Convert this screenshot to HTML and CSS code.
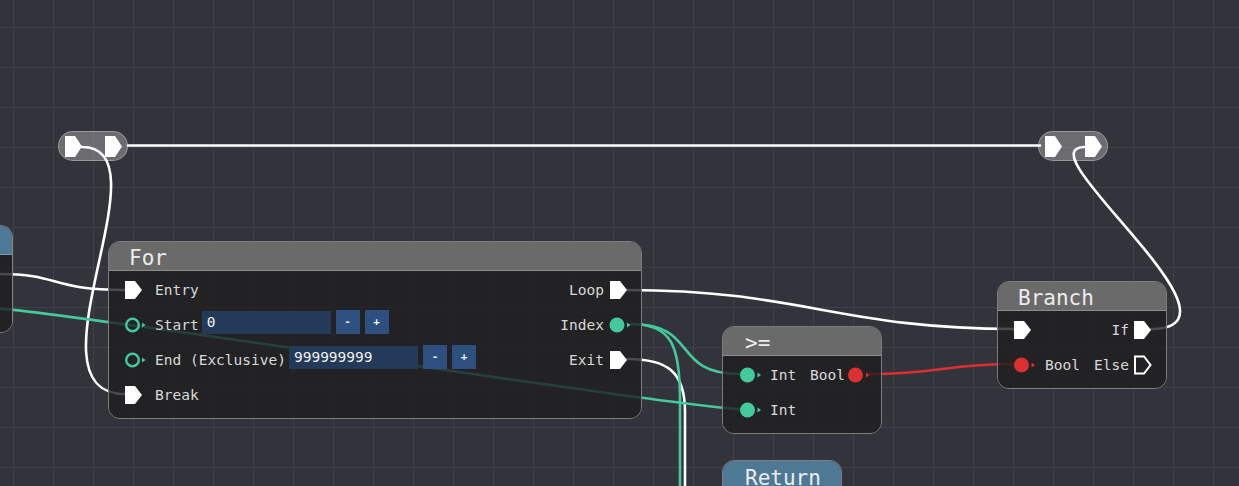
FILE: index.html
```html
<!DOCTYPE html>
<html>
<head>
<meta charset="utf-8">
<title>Blueprint</title>
<link rel="stylesheet" href="styles.css">
</head>
<body>
<div class="canvas">

  <div class="reroute reroute-left">
    <svg class="rpin" viewBox="0 0 17 21"><path d="M0 0H10L17 10.5L10 21H0Z"/></svg>
    <svg class="rpin" viewBox="0 0 17 21"><path d="M0 0H10L17 10.5L10 21H0Z"/></svg>
  </div>
  <div class="reroute reroute-right">
    <svg class="rpin" viewBox="0 0 17 21"><path d="M0 0H10L17 10.5L10 21H0Z"/></svg>
    <svg class="rpin" viewBox="0 0 17 21"><path d="M0 0H10L17 10.5L10 21H0Z"/></svg>
  </div>

  <svg class="links" width="1239" height="486" viewBox="0 0 1239 486">
    <g class="flow">
      <path d="M128 145.5H1040"/>
      <path d="M82 147C170 147 20 394 125 394"/>
      <path d="M1150 329C1262 329 1020 147 1085 147"/>
      <path d="M0 274C60 274 50 290 125 290"/>
      <path d="M627 290C800 290 840 329 1015 329"/>
      <path d="M627 359C668 359 685 372 685 412L685 490"/>
    </g>
    <g class="int">
      <path d="M-10 308C40 308 690 409 740 409"/>
      <path d="M631 324C700 324 670 374 740 374"/>
      <path d="M631 324C672 324 680 346 680 400L680 490"/>
    </g>
    <g class="bool">
      <path d="M870 374C940 374 945 364 1015 364"/>
    </g>
  </svg>

  <!-- partially visible node at the left edge -->
  <div class="node node-left">
    <div class="node-header blue"></div>
    <div class="node-body">
      <div class="pins inputs">
        <div class="pin-row"></div>
        <div class="pin-row"></div>
      </div>
    </div>
  </div>

  <!-- For node -->
  <div class="node node-for">
    <div class="node-header">For</div>
    <div class="node-body">
      <div class="pins inputs">
        <div class="pin-row">
          <svg class="icon" viewBox="0 0 24 24"><path class="flow-fill" d="M1 3H11L18 12L11 21H1Z"/></svg>
          <span class="label">Entry</span>
        </div>
        <div class="pin-row">
          <svg class="icon" viewBox="0 0 24 24"><circle class="int-ring" cx="8.5" cy="12" r="6.3"/><path class="int-fill" d="M18 9.5L21.5 12L18 14.5Z"/></svg>
          <span class="label">Start</span>
          <div class="num-field">
            <span class="num-input">0</span>
            <span class="num-btn">-</span>
            <span class="num-btn">+</span>
          </div>
        </div>
        <div class="pin-row">
          <svg class="icon" viewBox="0 0 24 24"><circle class="int-ring" cx="8.5" cy="12" r="6.3"/><path class="int-fill" d="M18 9.5L21.5 12L18 14.5Z"/></svg>
          <span class="label">End (Exclusive)</span>
          <div class="num-field">
            <span class="num-input">999999999</span>
            <span class="num-btn">-</span>
            <span class="num-btn">+</span>
          </div>
        </div>
        <div class="pin-row">
          <svg class="icon" viewBox="0 0 24 24"><path class="flow-fill" d="M1 3H11L18 12L11 21H1Z"/></svg>
          <span class="label">Break</span>
        </div>
      </div>
      <div class="pins outputs">
        <div class="pin-row">
          <span class="label">Loop</span>
          <svg class="icon" viewBox="0 0 24 24"><path class="flow-fill" d="M2 3H12L19 12L12 21H2Z"/></svg>
        </div>
        <div class="pin-row">
          <span class="label">Index</span>
          <svg class="icon" viewBox="0 0 24 24"><circle class="int-fill" cx="9" cy="12" r="7.5"/><path class="int-fill" d="M19 9.5L22.5 12L19 14.5Z"/></svg>
        </div>
        <div class="pin-row">
          <span class="label">Exit</span>
          <svg class="icon" viewBox="0 0 24 24"><path class="flow-fill" d="M2 3H12L19 12L12 21H2Z"/></svg>
        </div>
      </div>
    </div>
  </div>

  <!-- >= node -->
  <div class="node node-cmp">
    <div class="node-header">&gt;=</div>
    <div class="node-body">
      <div class="pins inputs">
        <div class="pin-row">
          <svg class="icon" viewBox="0 0 24 24"><circle class="int-fill" cx="8.5" cy="12" r="7.5"/><path class="int-fill" d="M18.5 9.5L22 12L18.5 14.5Z"/></svg>
          <span class="label">Int</span>
        </div>
        <div class="pin-row">
          <svg class="icon" viewBox="0 0 24 24"><circle class="int-fill" cx="8.5" cy="12" r="7.5"/><path class="int-fill" d="M18.5 9.5L22 12L18.5 14.5Z"/></svg>
          <span class="label">Int</span>
        </div>
      </div>
      <div class="pins outputs out-tight">
        <div class="pin-row">
          <span class="label">Bool</span>
          <svg class="icon" viewBox="0 0 24 24"><circle class="bool-fill" cx="8.5" cy="12" r="7.5"/><path class="bool-fill" d="M19 9.5L22.5 12L19 14.5Z"/></svg>
        </div>
      </div>
    </div>
  </div>

  <!-- Branch node -->
  <div class="node node-branch">
    <div class="node-header">Branch</div>
    <div class="node-body">
      <div class="pins inputs">
        <div class="pin-row">
          <svg class="icon" viewBox="0 0 24 24"><path class="flow-fill" d="M1 3H11L18 12L11 21H1Z"/></svg>
        </div>
        <div class="pin-row">
          <svg class="icon" viewBox="0 0 24 24"><circle class="bool-fill" cx="8.5" cy="12" r="7.5"/><path class="bool-fill" d="M18.5 9.5L22 12L18.5 14.5Z"/></svg>
          <span class="label">Bool</span>
        </div>
      </div>
      <div class="pins outputs">
        <div class="pin-row">
          <span class="label">If</span>
          <svg class="icon" viewBox="0 0 24 24"><path class="flow-fill" d="M1 3H11L18 12L11 21H1Z"/></svg>
        </div>
        <div class="pin-row">
          <span class="label">Else</span>
          <svg class="icon" viewBox="0 0 24 24"><path class="flow-hollow" d="M2 3.5H11L17.5 12L11 20.5H2Z"/></svg>
        </div>
      </div>
    </div>
  </div>

  <!-- Return node (cut off) -->
  <div class="node node-return">
    <div class="node-header blue">Return</div>
    <div class="node-body"></div>
  </div>

</div>
</body>
</html>
```

FILE: styles.css
```css
html, body {
  margin: 0;
  padding: 0;
  background: #33333b;
}

.canvas {
  position: relative;
  width: 1239px;
  height: 486px;
  overflow: hidden;
  background-color: #33333b;
  background-image:
    linear-gradient(to right, #404048 1px, transparent 1px),
    linear-gradient(to bottom, #404048 1px, transparent 1px);
  background-size: 40px 40px;
  background-position: 13px 27px;
  font-family: "DejaVu Sans Mono", "Liberation Mono", monospace;
}

/* ---------- reroute pills ---------- */
.reroute {
  position: absolute;
  z-index: 1;
  box-sizing: border-box;
  height: 30px;
  width: 70px;
  border-radius: 15px;
  background: rgba(165, 165, 165, 0.5);
  border: 1px solid rgba(205, 205, 205, 0.45);
  display: flex;
  align-items: center;
  padding-left: 6px;
  gap: 23px;
}
.reroute-left { left: 58px; top: 131px; }
.reroute-right { left: 1038px; top: 131px; }
.rpin {
  width: 17px;
  height: 21px;
  fill: #ffffff;
  display: block;
}

/* ---------- links ---------- */
.links {
  position: absolute;
  left: 0;
  top: 0;
  z-index: 2;
  overflow: visible;
}
.links path {
  fill: none;
  stroke-width: 2.6;
  stroke-linecap: round;
}
.links .flow path { stroke: #ffffff; }
.links .int path { stroke: #44c99c; }
.links .bool path { stroke: #dc3030; }

/* ---------- nodes ---------- */
.node {
  position: absolute;
  z-index: 3;
  box-sizing: border-box;
  border: 1px solid #7d7d7f;
  border-radius: 12px;
  overflow: hidden;
  color: #d8d8d8;
}
.node-header {
  box-sizing: border-box;
  height: 29px;
  padding: 5px 0 0 20px;
  background: rgba(108, 108, 108, 0.96);
  border-bottom: 1px solid #8e8e8e;
  font-size: 21px;
  line-height: 23px;
  color: #ececec;
  white-space: nowrap;
}
.node-header.blue {
  background: rgba(80, 124, 152, 0.97);
  border-bottom-color: #7a9bb0;
}
.node-body {
  display: flex;
  justify-content: space-between;
  padding: 1px 0 6px;
  background: rgba(30, 30, 32, 0.8);
}
.pins {
  display: flex;
  flex-direction: column;
}
.pin-row {
  height: 35px;
  display: flex;
  align-items: center;
  font-size: 14.5px;
  white-space: nowrap;
}
.inputs .pin-row { padding-left: 15px; }
.inputs .pin-row .icon { margin-right: 7px; }
.outputs .pin-row { padding-right: 9px; justify-content: flex-end; }
.outputs .pin-row .icon { margin-left: 4px; }
.out-tight .pin-row .icon { margin-left: 2px; }

.icon {
  width: 24px;
  height: 24px;
  display: block;
  flex: none;
}
.flow-fill { fill: #ffffff; }
.flow-hollow { fill: none; stroke: #ffffff; stroke-width: 2; stroke-linejoin: miter; }
.int-fill { fill: #44c99c; }
.int-ring { fill: none; stroke: #44c99c; stroke-width: 2.4; }
.bool-fill { fill: #dc3030; }

.label { color: #d8d8d8; }

/* numeric input widget */
.num-field {
  display: flex;
  align-items: center;
  gap: 5px;
  margin-left: 3px;
  margin-bottom: 5px;
}
.num-input {
  box-sizing: border-box;
  width: 129px;
  height: 23px;
  line-height: 23px;
  padding-left: 5px;
  background: #233a58;
  color: #f2f2f2;
  font-size: 14.5px;
}
.num-btn {
  width: 24px;
  height: 24px;
  line-height: 23px;
  text-align: center;
  background: #2d5080;
  color: #f0f0f0;
  font-size: 11px;
  font-weight: bold;
}

/* node placement on the canvas */
.node-left { left: -150px; top: 225px; width: 163px; }
.node-for { left: 108px; top: 241px; width: 534px; }
.node-cmp { left: 722px; top: 326px; width: 160px; }
.node-cmp .inputs .pin-row { padding-left: 16px; }
.node-cmp .outputs .pin-row { padding-right: 10px; }
.node-branch { left: 997px; top: 281px; width: 170px; }
.node-branch .inputs .pin-row { padding-left: 15px; }
.node-branch .inputs .pin-row .icon { margin-right: 8px; }
.node-branch .outputs .pin-row { padding-right: 9px; }
.node-return { left: 722px; top: 460px; width: 120px; height: 60px; }
.node-return .node-header { padding-left: 22px; padding-top: 6px; }
.node-return .node-body { height: 40px; }
.node-cmp .node-header { padding-left: 22px; }
```
